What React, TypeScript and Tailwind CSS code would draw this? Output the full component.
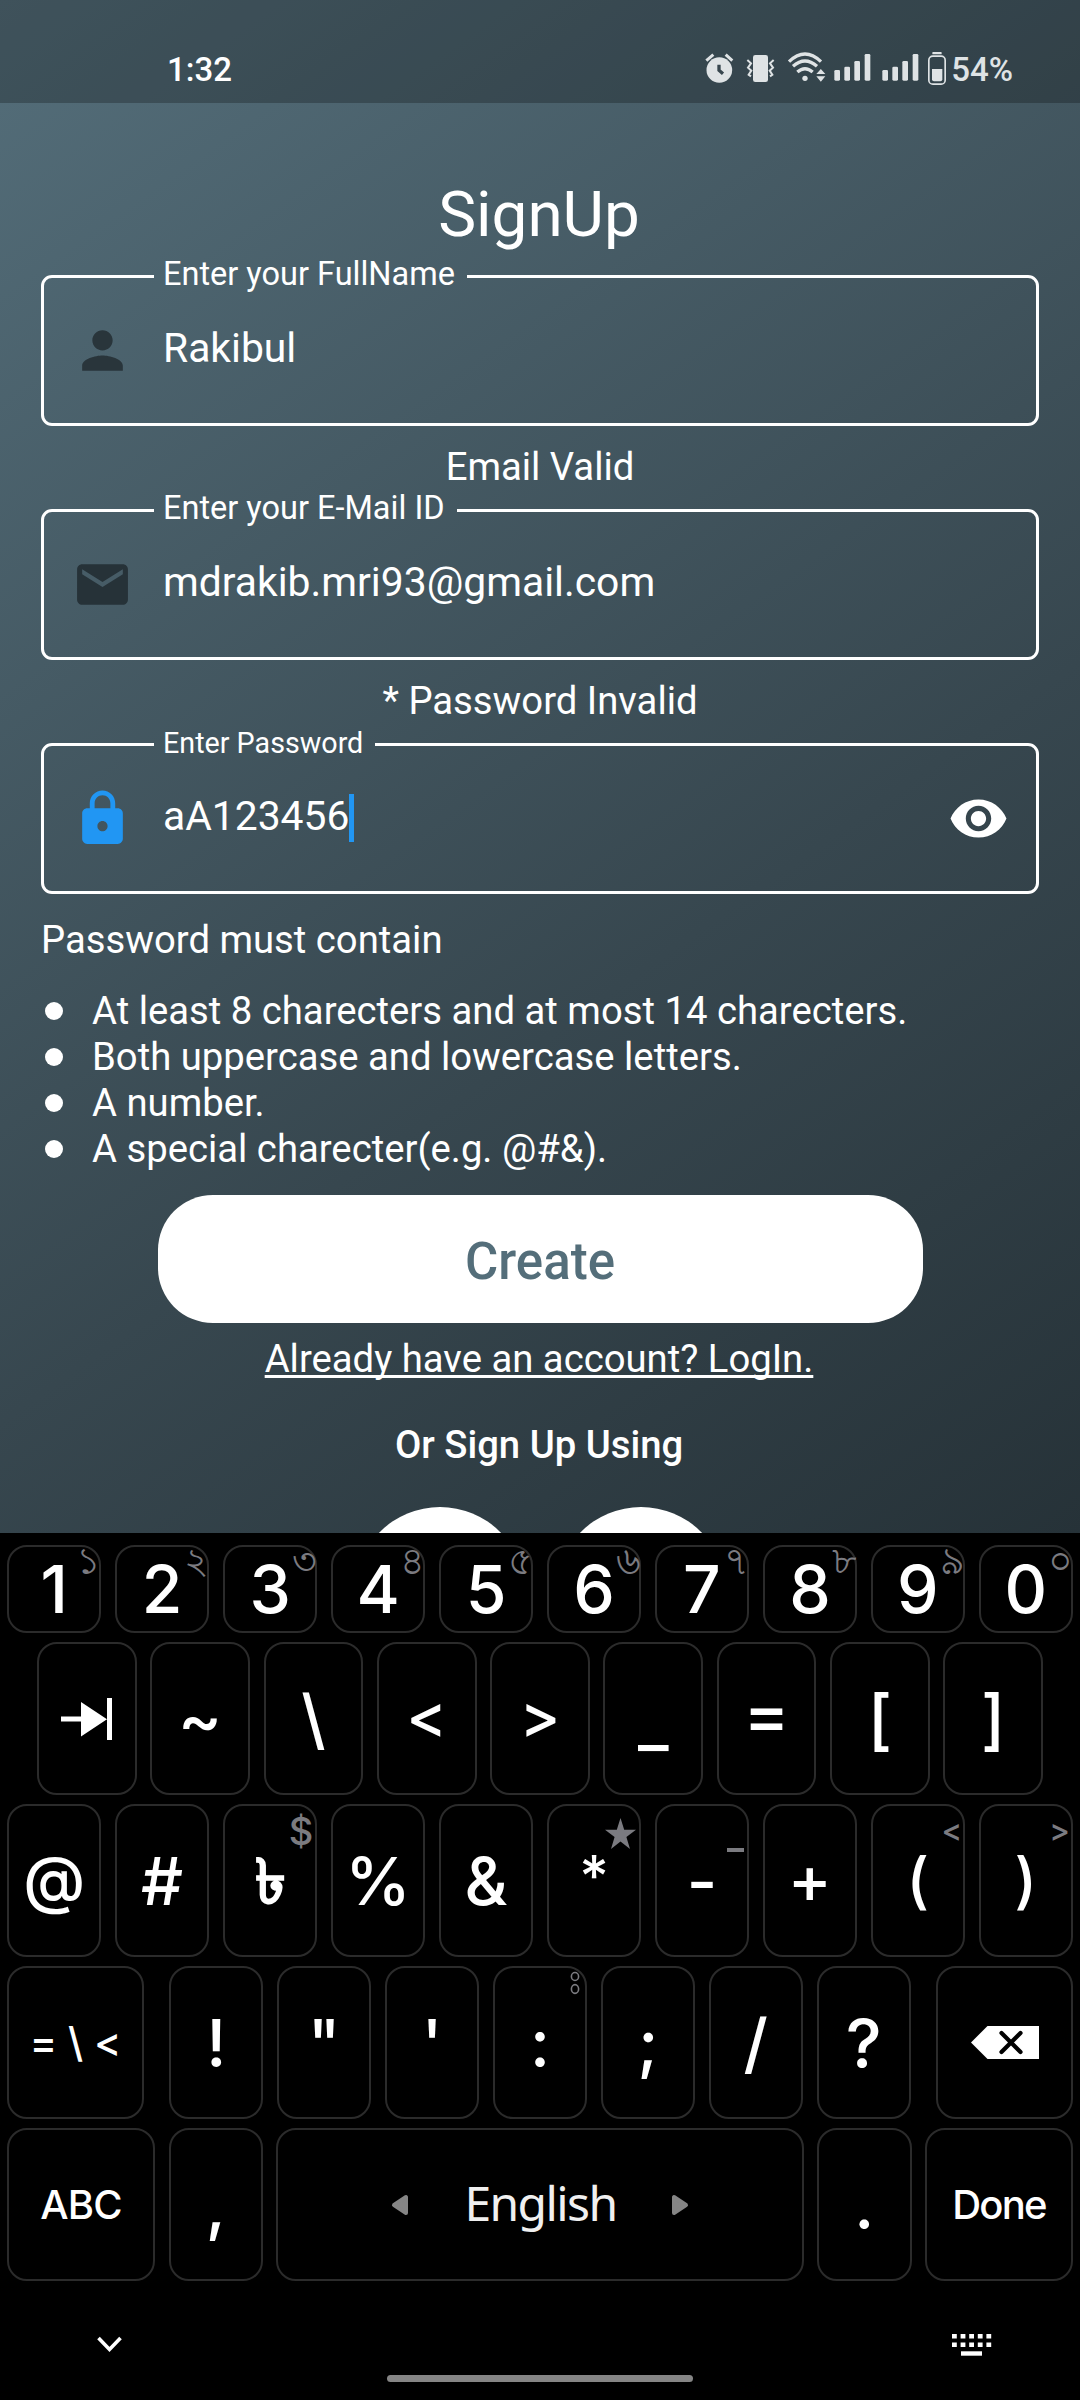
import { type ReactNode } from "react";
import { MdPerson, MdEmail, MdLock, MdRemoveRedEye } from "react-icons/md";

const ICON = "#dfe3e5";

function SignalBars({ x }: { x: number }) {
  return (
    <g>
      <rect x={x} y="120" width="17" height="32" rx="4" />
      <rect x={x + 30} y="110" width="17" height="42" rx="4" />
      <rect x={x + 60} y="93" width="17" height="59" rx="4" />
      <rect x={x + 91} y="72" width="17" height="80" rx="4" />
    </g>
  );
}

function StatusBar() {
  return (
    <div className="flex h-[103px] items-start bg-black/25">
      <span className="ml-[167px] mt-[50px] text-[33px] leading-[39px] font-medium">1:32</span>
      <div className="ml-auto mt-[50px] flex">
        <svg className="h-[37px] w-9" viewBox="72 60 108 111" fill={ICON}>
          <circle cx="118" cy="120" r="38.5" />
          <path d="M79 92 100 74M137 74l20 18" stroke={ICON} strokeWidth="9" />
          <path d="M117 104v17l12 10" stroke="#37464e" strokeWidth="10" fill="none" />
        </svg>
        <svg className="h-[37px] w-10" viewBox="180 60 120 111" fill={ICON}>
          <rect x="219" y="75" width="45" height="81" rx="7" />
          <path d="M202 90l11 10-9 13 10 9-8 12 7 5M281 90l-11 10 9 13-10 9 8 12-7 5" fill="none" stroke={ICON} strokeWidth="6" />
        </svg>
        <svg className="h-[37px] w-[50px]" viewBox="300 60 150 111" fill={ICON}>
          <path d="M327 95q48-46 96 0M339 109q36-32 72 0M352 126q23-20 46 0" fill="none" stroke={ICON} strokeWidth="10" />
          <circle cx="375" cy="145" r="8" />
          <path d="M409 132h27l-13.500-15zM409 139h27l-13.500 16z" />
        </svg>
        <svg className="h-[37px] w-12" viewBox="450 60 144 111" fill={ICON}>
          <SignalBars x={463} />
        </svg>
        <svg className="h-[37px] w-12" viewBox="594 60 144 111" fill={ICON}>
          <SignalBars x={607} />
        </svg>
        <svg className="h-[37px] w-[22px]" viewBox="738 60 66 111" fill={ICON}>
          <rect x="757" y="66" width="28" height="7" rx="2" />
          <rect x="746.500" y="78.500" width="49" height="84" rx="12" fill="none" stroke={ICON} strokeWidth="5" />
          <path d="M756 117h31v31q0 6-6 6h-19q-6 0-6-6z" />
        </svg>
      </div>
      <span className="mr-[67px] ml-[3px] mt-[50px] text-[33px] leading-[39px] font-medium text-[#dfe3e5]">54%</span>
    </div>
  );
}

type FieldProps = {
  label: string;
  labelClass: string;
  value: string;
  icon: ReactNode;
  focused?: boolean;
  trailing?: ReactNode;
};

function Field({ label, labelClass, value, icon, focused, trailing }: FieldProps) {
  return (
    <fieldset className="mx-[41px] h-[170px] shrink-0 rounded-[11px] border-[3px] border-white">
      <legend className={`ml-[110px] h-[41px] pr-[12px] pl-[9px] ${labelClass}`}>{label}</legend>
      <div className="flex h-[126px] items-center px-[28px] pb-[20px]">
        {icon}
        <span className="ml-[30px] pb-[5px] text-[40.800px] leading-[48px]">{value}</span>
        {focused && <span className="h-[48px] w-[5px] bg-[#2196f3]" />}
        {trailing && <span className="ml-auto">{trailing}</span>}
      </div>
    </fieldset>
  );
}

const rules = [
  "At least 8 charecters and at most 14 charecters.",
  "Both uppercase and lowercase letters.",
  "A number.",
  "A special charecter(e.g. @#&).",
];

function SignUpForm() {
  return (
    <div className="flex h-[1430px] flex-col overflow-hidden text-[38.250px] leading-[46px]">
      <h1 className="mt-[74px] h-[79px] shrink-0 pr-[2px] text-center text-[63.800px] leading-[76px]">SignUp</h1>
      <Field label="Enter your FullName" labelClass="text-[32.500px] leading-[36px]" value="Rakibul" icon={<MdPerson size={61} className="text-[#29353b]" />} />
      <p className="h-16 shrink-0 pt-[18px] text-center">Email Valid</p>
      <Field label="Enter your E-Mail ID" labelClass="text-[32.500px] leading-[36px]" value="mdrakib.mri93@gmail.com" icon={<MdEmail size={61} className="text-[#263238]" />} />
      <p className="h-16 shrink-0 pt-[18px] text-center">* Password Invalid</p>
      <Field
        label="Enter Password"
        labelClass="text-[28.700px] leading-[38px]"
        value="aA123456"
        focused
        icon={<MdLock size={61} className="text-[#2196f3]" />}
        trailing={<MdRemoveRedEye size={61} className="translate-x-px" />}
      />
      <p className="mt-[23px] ml-[41px] shrink-0">Password must contain</p>
      <ul className="mt-[25px] ml-[45px] shrink-0">
        {rules.map((r) => (
          <li key={r} className="flex items-center gap-[29px]">
            <span className="size-[18px] rounded-full bg-white" />
            {r}
          </li>
        ))}
      </ul>
      <button className="mx-auto mt-[23px] h-[128px] w-[765px] shrink-0 rounded-[55px] bg-white pt-[5px] text-[51px] font-medium text-[#546e7a]">
        Create
      </button>
      <a className="mt-[13px] shrink-0 pr-[2px] text-center underline decoration-[2.5px] underline-offset-[3px] [text-decoration-skip-ink:none]">
        Already have an account? LogIn.
      </a>
      <p className="mt-[40px] shrink-0 pr-[2px] text-center font-medium">Or Sign Up Using</p>
      <div className="mt-[39px] flex shrink-0 justify-center gap-[31px]">
        <span className="size-[170px] shrink-0 rounded-full bg-white" />
        <span className="size-[170px] shrink-0 rounded-full bg-white" />
      </div>
    </div>
  );
}

type KeyProps = { children?: ReactNode; hint?: ReactNode; hintClass?: string; className?: string };

function Key({ children, hint, hintClass = "", className = "flex-1" }: KeyProps) {
  return (
    <div className={`relative flex items-center justify-center rounded-[20px] border-[2.500px] border-[#2b2b2b] ${className}`}>
      {children}
      {hint && <span className={`absolute text-[#7b7b80] ${hintClass}`}>{hint}</span>}
    </div>
  );
}

const glyphClass: Record<string, string> = {
  "<": "text-[61px] -translate-y-[2px]",
  ">": "text-[61px] -translate-y-[2px]",
  _: "translate-y-[2px]",
  "=": "text-[69px] -translate-y-[4px]",
  "*": "text-[57px] -translate-y-[4px]",
  "@": "text-[63px] -translate-y-[1px]",
  "+": "-translate-y-[2px]",
  "(": "text-[61px]",
  ")": "text-[61px]",
  "৳": "text-[62px] [-webkit-text-stroke:2.500px_white]",
  "?": "text-[68px]",
};

function Glyph({ k }: { k: string }) {
  return <span className={glyphClass[k] ?? ""}>{k}</span>;
}

const digits = [
  ["1", "১"], ["2", "২"], ["3", "৩"], ["4", "৪"], ["5", "৫"],
  ["6", "৬"], ["7", "৭"], ["8", "৮"], ["9", "৯"], ["0", "০"],
];

const symbols: { k: string; hint?: ReactNode; pos?: string }[] = [
  { k: "@" },
  { k: "#" },
  { k: "৳", hint: "$", pos: "top-[5px] right-[2px] text-[38px] leading-[40px] font-medium" },
  { k: "%" },
  { k: "&" },
  {
    k: "*",
    hint: (
      <svg className="h-[31px] w-[31px]" viewBox="0 0 31 31" fill="currentColor">
        <path d="M15.500 0 19.200 11.700H31L21.400 19 25 31 15.500 23.600 6 31 9.600 19 0 11.700H11.800Z" />
      </svg>
    ),
    pos: "top-[12px] right-[3px]",
  },
  { k: "-", hint: <span className="block h-[4px] w-[17px] bg-[#7b7b80]" />, pos: "top-[42px] right-[3px]" },
  { k: "+" },
  { k: "(", hint: "<", pos: "top-[4px] right-[1px] text-[31px] leading-[40px] font-medium" },
  { k: ")", hint: ">", pos: "top-[4px] right-[1px] text-[31px] leading-[40px] font-medium" },
];

const punctuation = ["!", '"', "'", ":", ";", "/", "?"];

function Keyboard() {
  return (
    <div className="flex h-[867px] flex-col gap-[9.300px] bg-black pt-[12px] font-['Inter',sans-serif] text-[66px] leading-none font-[550]">
      <div className="flex h-[88px] gap-[13.500px] px-[7px]">
        {digits.map(([k, h]) => (
          <Key key={k} hint={h} hintClass="top-[-7px] right-[-2px] text-[38px] leading-[40px] font-normal">{k}</Key>
        ))}
      </div>
      <div className="flex h-[152.700px] gap-[13.700px] px-[37px]">
        <Key>
          <svg className="h-[42px] w-[52px]" viewBox="0 0 52 42" fill="white">
            <path d="M0 18.500h20V4l26 17.300L20 38.500v-15H0zM46 0h5v42h-5z" />
          </svg>
        </Key>
        {["~", "\\", "<", ">", "_", "=", "[", "]"].map((k) => (
          <Key key={k}><Glyph k={k} /></Key>
        ))}
      </div>
      <div className="flex h-[152.700px] gap-[13.500px] px-[7px]">
        {symbols.map(({ k, hint, pos }) => (
          <Key key={k} hint={hint} hintClass={pos}><Glyph k={k} /></Key>
        ))}
      </div>
      <div className="flex h-[152.700px] justify-between px-[7px]">
        <Key className="w-[137px]">
          <span className="text-[41px]">= \ &lt;</span>
        </Key>
        <div className="flex w-[742px] gap-[13.500px]">
          {punctuation.map((k) => (
            <Key
              key={k}
              hintClass="top-[3px] right-[5px]"
              hint={
                k === ":" && (
                  <svg className="h-[24px] w-[10px]" viewBox="0 0 10 24" fill="none" stroke="currentColor" strokeWidth="1.600">
                    <ellipse cx="5" cy="5.500" rx="3.600" ry="4" />
                    <ellipse cx="5" cy="18" rx="3.600" ry="4.400" />
                  </svg>
                )
              }
            >
              <Glyph k={k} />
            </Key>
          ))}
        </div>
        <Key className="w-[137px]">
          <svg className="h-[33px] w-[68px]" viewBox="0 0 68 33">
            <path d="M0 16.500 16.500 0H68v33H16.500z" fill="white" />
            <path d="M30.500 7l19 19m0-19l-19 19" stroke="black" strokeWidth="4.200" strokeLinecap="round" />
          </svg>
        </Key>
      </div>
      <div className="flex h-[152.700px] gap-[13.500px] px-[7px]">
        <Key className="w-[148px]">
          <span className="text-[40px] font-medium tracking-[-0.800px]">ABC</span>
        </Key>
        <Key className="w-[94.450px]">,</Key>
        <Key className="flex-1 gap-[56px]">
          <svg className="h-[22px] w-[18px]" viewBox="0 0 18 22" fill="#858585" stroke="#858585" strokeWidth="4" strokeLinejoin="round">
            <path d="M15 3v16L3 11z" />
          </svg>
          <span className="-translate-x-px -translate-y-[2px] font-['Noto_Sans',sans-serif] text-[48px] leading-[60px] font-normal tracking-[-1.600px] text-[#f0f0f0]">English</span>
          <svg className="-ml-[3px] h-[22px] w-[18px]" viewBox="0 0 18 22" fill="#858585" stroke="#858585" strokeWidth="4" strokeLinejoin="round">
            <path d="M3 3v16l12-8z" />
          </svg>
        </Key>
        <Key className="w-[94.450px]">.</Key>
        <Key className="w-[148px]">
          <span className="text-[40px] font-medium tracking-[-1.800px]">Done</span>
        </Key>
      </div>
      <div className="flex h-[109px] justify-between pr-[88px] pl-[97px]">
        <svg className="mt-[46px] h-[17px] w-[25px]" viewBox="0 0 25 17" fill="none" stroke="white" strokeWidth="3.600">
          <path d="M1.500 2 12.500 13.500 23.500 2" />
        </svg>
        <div className="mt-[84.500px] h-[7px] w-[306px] translate-x-[3px] rounded-full bg-[#858585]" />
        <svg className="mt-[44px] h-[23px] w-[40px]" viewBox="0 0 40 23" fill="white">
          {[0, 8.6, 17.2, 25.8, 34.4].map((x) => (
            <path key={x} d={`M${x} 0h4.800v4.500h-4.800zM${x} 8.600h4.800v4.500h-4.800z`} />
          ))}
          <path d="M9 17.300h21v4.400H9z" />
        </svg>
      </div>
    </div>
  );
}

export default function App() {
  return (
    <div className="h-[2400px] w-[1080px] overflow-hidden bg-black font-['Roboto',sans-serif] text-white">
      <div className="h-[1533px] bg-[linear-gradient(144.8deg,#546e7a,#37474f_62%,#263238)]">
        <StatusBar />
        <SignUpForm />
      </div>
      <Keyboard />
    </div>
  );
}
